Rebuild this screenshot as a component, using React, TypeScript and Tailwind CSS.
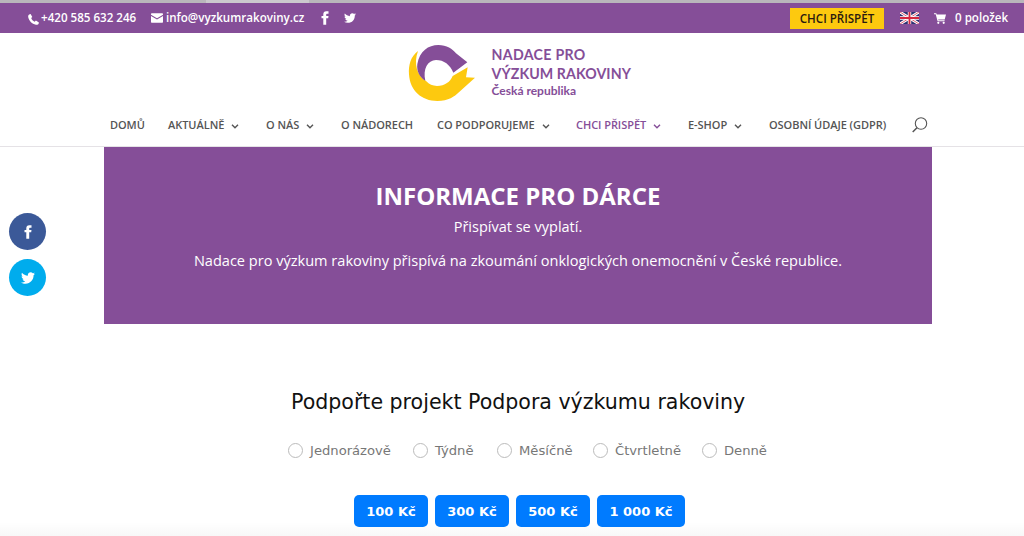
import { FaTwitter } from 'react-icons/fa';

const NAV = [
    { label: 'DOMŮ', width: 'w-[58px]' },
    { label: 'AKTUÁLNĚ', width: 'w-[98px]', menu: true },
    { label: 'O NÁS', width: 'w-[75px]', menu: true },
    { label: 'O NÁDORECH', width: 'w-[96px]' },
    { label: 'CO PODPORUJEME', width: 'w-[139px]', menu: true },
    { label: 'CHCI PŘISPĚT', width: 'w-[112px]', menu: true, active: true },
    { label: 'E-SHOP', width: 'w-[81px]', menu: true },
    { label: 'OSOBNÍ ÚDAJE (GDPR)', width: 'w-[143px]' },
];

const PERIODS = [
    { label: 'Jednorázově', width: 'w-[125px]' },
    { label: 'Týdně', width: 'w-[84px]' },
    { label: 'Měsíčně', width: 'w-[96px]' },
    { label: 'Čtvrtletně', width: 'w-[109px]' },
    { label: 'Denně', width: 'w-[66px]' },
];

const AMOUNTS = [
    { label: '100 Kč', width: 'w-[74px]' },
    { label: '300 Kč', width: 'w-[74px]' },
    { label: '500 Kč', width: 'w-[74px]' },
    { label: '1 000 Kč', width: 'w-[88px]' },
];

function Phone() {
    return (
        <svg className="mt-[2px] h-[11px] w-[11px] shrink-0" viewBox="0 0 11 11" fill="currentColor">
            <path d="M1.1.6 2.600.1 4.300 3 3.200 4.100c.6 1.700 1.700 2.900 3.500 3.700l1.200-1.200 3 1.800-.3 1.400c-.4.9-1.600 1.100-2.700.9C4 10 .7 6.600.2 3 .1 1.900.4 1 1.100.6Z" />
        </svg>
    );
}

function Mail() {
    return (
        <svg className="h-[10px] w-[12px] shrink-0" viewBox="0 0 12 10" fill="currentColor">
            <path d="M.7.3h10.600q.7 0 .7.7v.700L6 5.300 0 1.700V1Q0 .3.7.3Z" />
            <path d="m0 3 6 3.500L12 3v6q0 .7-.7.700H.7Q0 9.700 0 9Z" />
        </svg>
    );
}

function Facebook() {
    return (
        <svg className="h-[14px] w-[8px] shrink-0" viewBox="0 0 8 14" fill="currentColor">
            <path d="M7.500.3v2.500H5.900q-.7 0-.7.8v1.300h2.300l-.3 2.400h-2v6.400H2.300V7.300H.5V4.900h1.800V3.300Q2.300.3 5.300.3Z" />
        </svg>
    );
}

function Flag() {
    return (
        <svg className="h-[12px] w-[19px] shrink-0" viewBox="0 0 20 12" preserveAspectRatio="none">
            <path d="M0 0h20v12H0z" fill="#2d3172" />
            <path d="m0 0 20 12M20 0 0 12" stroke="#fff" strokeWidth="2.800" />
            <path d="m0 0 20 12M20 0 0 12" stroke="#d5344b" strokeWidth=".8" />
            <path d="M10 0v12M0 6h20" stroke="#fff" strokeWidth="3.600" />
            <path d="M10 0v12M0 6h20" stroke="#d5273f" strokeWidth="2" />
        </svg>
    );
}

function Cart() {
    return (
        <svg className="h-[11px] w-[12px] shrink-0" viewBox="0 0 12 11" fill="currentColor">
            <path d="M0 .2h2.300l.4 1.200H12l-1.300 5H4.200l.2.900h6.200v1H3.600L1.700 1.200H0Z" />
            <circle cx="4.300" cy="9.800" r="1.100" />
            <circle cx="9.700" cy="9.800" r="1.100" />
        </svg>
    );
}

function Logo() {
    return (
        <svg className="h-[70px] w-[80px] shrink-0" viewBox="0 0 240 210">
            <path d="M54 45C32 61 25 88 27 115c3 50 38 80 85 80 33 0 53-15 63-25l50-45-27-1 5-30-45 26c-7 17-23 30-47 30-13 0-24-5-32-14C51 120 40 82 54 45Z" fill="#fdc90f" />
            <path d="M52 84c7-39 33-57 63-57 25 0 43 12 53 25l34 27-42 31c-10-24-28-38-52-38-25 1-40 27-32 62-16-9-27-27-24-50Z" fill="#854e98" />
        </svg>
    );
}

function Chevron() {
    return (
        <svg className="mt-[2px] ml-[7px] h-[5px] w-[8px] shrink-0" viewBox="0 0 8 5" fill="none" stroke="currentColor" strokeWidth="1.400">
            <path d="m1 .8 3 3 3-3" />
        </svg>
    );
}

export default function App() {
    return (
        <div className="relative h-[536px] w-[1024px] overflow-hidden bg-white font-['Open_Sans',sans-serif]">
            <div className="flex h-[3px] bg-[#b9b6bb]">
                <div className="ml-[206px] w-[103px] bg-[#cbc8cd]" />
            </div>
            <div className="flex h-[30px] items-center bg-[#854e98] pl-[28px] text-[11.600px] leading-[30px] font-semibold text-white">
                <div className="flex w-[123px] items-center gap-[2px]">
                    <Phone />
                    <span className="whitespace-nowrap">+420 585 632 246</span>
                </div>
                <div className="flex w-[170px] items-center gap-[3px]">
                    <Mail />
                    <span className="whitespace-nowrap">info@vyzkumrakoviny.cz</span>
                </div>
                <Facebook />
                <FaTwitter className="ml-[15px] h-[12px] w-[12px]" />
                <a className="ml-[434px] h-[21px] w-[94px] bg-[#fdc90f] text-center leading-[21px] whitespace-nowrap text-[#2b1a10]">CHCI PŘISPĚT</a>
                <div className="ml-[16px]"><Flag /></div>
                <div className="ml-[15px]"><Cart /></div>
                <span className="ml-[9px] whitespace-nowrap">0 položek</span>
            </div>

            <header className="h-[114px] border-b border-[#e5e2e6]">
                <div className="flex h-[76px] pt-[3px] pl-[400px]">
                    <Logo />
                    <div className="ml-[11.500px] pt-[9px] font-['Lato',sans-serif] font-bold text-[#854e98]">
                        <div className="text-[14.200px] leading-[19px] tracking-[0.300px] whitespace-nowrap">NADACE PRO</div>
                        <div className="text-[14.200px] leading-[19px] tracking-[0.080px] whitespace-nowrap">VÝZKUM RAKOVINY</div>
                        <div className="text-[12px] leading-[16px] whitespace-nowrap">Česká republika</div>
                    </div>
                </div>
                <nav className="flex h-[32px] items-center pl-[110px] text-[11px] tracking-[-0.050px] font-semibold text-[#555]">
                    {NAV.map((item) => (
                        <div key={item.label} className={`flex shrink-0 items-center whitespace-nowrap ${item.width} ${item.active ? 'text-[#854e98]' : ''}`}>
                            <span>{item.label}</span>
                            {item.menu && <Chevron />}
                        </div>
                    ))}
                    <svg className="h-[16px] w-[16px]" viewBox="0 0 16 16" fill="none" stroke="#555" strokeWidth="1.100">
                        <circle cx="9" cy="6.500" r="5.700" />
                        <path d="m5 10.800-4.300 4.200" strokeWidth="1.500" />
                    </svg>
                </nav>
            </header>

            <section className="ml-[104px] h-[177px] w-[828px] bg-[#854e98] pt-[32px] text-center text-white">
                <h1 className="text-[24px] leading-[34px] font-bold">INFORMACE PRO DÁRCE</h1>
                <p className="text-[14.500px] leading-[28px]">Přispívat se vyplatí.</p>
                <p className="mt-[5px] text-[14.550px] leading-[28px] whitespace-nowrap">Nadace pro výzkum rakoviny přispívá na zkoumání onklogických onemocnění v České republice.</p>
            </section>

            <section className="pt-[62px] font-['DejaVu_Sans',Verdana,sans-serif]">
                <h2 className="ml-[291px] text-[20.550px] leading-[32px] whitespace-nowrap text-[#111]">Podpořte projekt Podpora výzkumu rakoviny</h2>
                <div className="mt-[21px] ml-[288px] flex h-[24px] items-center text-[13.150px] text-[#777]">
                    {PERIODS.map((p) => (
                        <label key={p.label} className={`flex shrink-0 items-center whitespace-nowrap ${p.width}`}>
                            <span className="mr-[7px] h-[15px] w-[15px] shrink-0 rounded-full border border-[#bbb] bg-white" />
                            {p.label}
                        </label>
                    ))}
                </div>
                <div className="mt-[32px] ml-[354px] flex gap-[7px]">
                    {AMOUNTS.map((a) => (
                        <button key={a.label} className={`h-[32px] rounded-[5px] bg-[#007bff] pt-px text-[13px] font-bold whitespace-nowrap text-white ${a.width}`}>
                            {a.label}
                        </button>
                    ))}
                </div>
            </section>

            <div className="absolute top-[213px] left-[9px] flex flex-col gap-[9px] text-white">
                <a className="flex h-[37px] w-[37px] items-center justify-center rounded-full bg-[#3b5998]">
                    <Facebook />
                </a>
                <a className="flex h-[37px] w-[37px] items-center justify-center rounded-full bg-[#00aced]">
                    <FaTwitter className="h-[14px] w-[14px]" />
                </a>
            </div>
            <div className="absolute inset-x-0 bottom-0 h-[14px] bg-linear-to-b from-transparent to-black/3" />
        </div>
    );
}
